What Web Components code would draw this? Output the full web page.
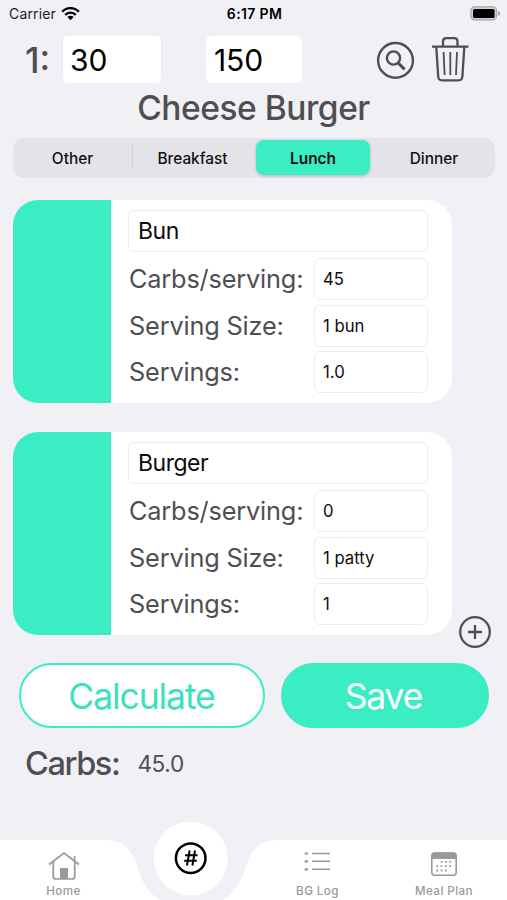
<!DOCTYPE html>
<html lang="en">
<head>
<meta charset="utf-8">
<title>Meal</title>
<style>
html,body{margin:0;background:#f0f0f5}
body{font-family:Inter,"Liberation Sans",sans-serif;color:#4f4f51;width:507px;height:900px;overflow:hidden}
</style>
</head>
<body>
<meal-screen></meal-screen>
<script>
const define = (name, html) => {
  const template = document.createElement('template');
  template.innerHTML = '<style>*{box-sizing:border-box}svg{display:block}:host{box-sizing:border-box;white-space:nowrap}</style>' + html;
  customElements.define(name, class extends HTMLElement {
    constructor() {
      super();
      this.attachShadow({mode: 'open'}).append(template.content.cloneNode(true));
    }
  });
};

define('status-bar', `
<style>
:host{display:grid;grid-template-columns:1fr auto 1fr;align-items:center;height:27px;padding:0 6px 0 9px;font-size:14px;color:#1c1c1e}
.l{display:flex;align-items:center;gap:5px;letter-spacing:.15px}
.t{font-weight:600;color:#000;font-size:14px;letter-spacing:.35px;padding-right:1px}
.b{justify-self:end}
</style>
<div class="l"><span>Carrier</span>
<svg width="19" height="15" viewBox="0 0 19 15" fill="none" stroke="#000" stroke-width="2.3"><path d="M1.2 5.7A11.6 11.6 0 0 1 17.8 5.7"/><path d="M4.2 8.9A7.3 7.3 0 0 1 14.8 8.9"/><path d="M9.5 14.2L6.4 11.1A4.4 4.4 0 0 1 12.6 11.1Z" fill="#000" stroke="none"/></svg></div>
<span class="t">6:17 PM</span>
<svg class="b" width="31" height="15" viewBox="0 0 31 15"><rect x=".9" y=".9" width="25.6" height="13" rx="3.8" fill="#d4d4d8" stroke="#a5a5a9" stroke-width="1.2"/><rect x="3" y="3" width="21.6" height="9" rx="1.5"/><path d="M28 4.8q2.2 1 2.2 2.7t-2.2 2.7z" fill="#a5a5a9"/></svg>`);

define('text-field', `
<style>
:host{display:flex;flex-shrink:0;align-items:center;height:42px;padding:0 8px;background:#fff;border:1px solid #ececee;border-radius:6px;color:#0c0c0e;font-size:16.7px}
:host([large]){font-size:23px;letter-spacing:-.5px;padding:0 9px}
:host([ratio]){height:49px;font-size:30px;letter-spacing:-.1px;padding:0 7px;border-color:#f0f0f2;color:#000}
</style><slot></slot>`);

define('ratio-row', `
<style>
:host{display:flex;height:49px;margin:8px 38px 0 25px;align-items:center}
b{font-weight:500;font-size:35px;width:37px;flex-shrink:0}
text-field:nth-of-type(1){width:100px;margin-right:43px}
text-field:nth-of-type(2){width:98px;padding-left:8px}
svg{flex-shrink:0}
.s{margin:0 0 0 73px}.t{margin-left:17px}
</style>
<b>1:</b><text-field ratio>30</text-field><text-field ratio>150</text-field>
<svg class="s" width="39" height="39" viewBox="0 0 39 39" fill="none" stroke="#4f4f51" stroke-width="2.4"><circle cx="19.5" cy="20.4" r="17.4"/><circle cx="17.5" cy="18" r="6.6"/><path d="M22.2 23L28.6 29.4" stroke-width="3"/></svg>
<svg class="t" width="37" height="47" viewBox="0 0 37 47" fill="none" stroke="#4f4f51" stroke-width="2.3"><path d="M0 10.7H36.5M11 10.5V5.5Q11 2.2 14.3 2.2H22.2Q25.5 2.2 25.5 5.5V10.5"/><path d="M4.3 11L6.2 40.5Q6.6 44.4 10.2 44.4H26.5Q30 44.4 30.4 40.5L32.3 11"/><path d="M11.6 16L12.6 39M18.3 16V39M25 16L24 39" stroke-width="1.8"/></svg>`);

define('meal-title', `<style>:host{display:block;height:50px;line-height:48px;text-align:center;font-size:33.5px;font-weight:500;letter-spacing:-.45px}</style><slot></slot>`);

define('segment-item', `
<style>:host{display:flex;align-items:center;justify-content:center;border-radius:8px;padding-top:1px;font-size:15.4px;font-weight:500;color:#111113}
:host([selected]){font-weight:600;background:#3aedc3;box-shadow:0 1px 3px #0003}
:host([divided]){border-right:1px solid transparent;border-image:linear-gradient(#0000 20%,#cfcfd4 20% 80%,#0000 80%) 1}</style><slot></slot>`);
define('segment-bar', `
<style>:host{display:grid;grid-template-columns:120px 121px 116px 1fr;height:40px;padding:2px 0 3px 0;margin:0 12px 0 13px;border-radius:11px;background:#e4e4e8}
::slotted(:nth-child(2)){padding-right:2px}::slotted(:nth-child(3)){margin:0 0 0 2px}::slotted(:nth-child(4)){padding-left:3px}</style><slot></slot>`);

define('food-card', `
<style>
:host{display:flex;width:439px;height:203px;margin-left:13px;border-radius:25px;background:#fff;overflow:hidden}
.g{width:98px;background:#3aedc3}
.f{flex:1;display:grid;grid-template-columns:186px 114px;grid-template-rows:42px 48px 47px 46px;align-content:start;padding:10px 0 0 17px;align-items:end}
.n{grid-column:1/3}
.label{font-size:25.3px;line-height:42px;letter-spacing:-.17px;padding-left:1px}
</style>
<div class="g"></div>
<div class="f"><text-field class="n" large><slot name="name"></slot></text-field>
<span class="label">Carbs/serving:</span><text-field><slot name="carbs"></slot></text-field>
<span class="label">Serving Size:</span><text-field><slot name="size"></slot></text-field>
<span class="label">Servings:</span><text-field><slot name="count"></slot></text-field></div>`);

define('food-list', `
<style>:host{display:grid;position:relative;height:435px;row-gap:29px;margin-top:22.4px;align-content:start}
svg{position:absolute;right:15px;bottom:-14px}</style><slot></slot>
<svg width="34" height="34" viewBox="0 0 34 34" fill="none" stroke="#4f4f51" stroke-width="2.3"><circle cx="17" cy="17" r="14.8"/><path d="M10 17H24M17 10V24"/></svg>`);

define('pill-button', `
<style>:host{display:flex;align-items:center;justify-content:center;height:65px;padding-top:2px;border-radius:33px;border:2px solid #3aedc3;background:#fff;color:#3be2bb;font-size:35.5px;letter-spacing:-1.1px}
:host([filled]){background:#3aedc3;color:#fff;padding-right:3px}</style><slot></slot>`);
define('action-row', `<style>:host{display:grid;grid-template-columns:246px 208px;column-gap:16px;margin:27.8px 0 0 19px}
::slotted(:first-child){padding-right:1px}</style><slot></slot>`);
define('carb-total', `<style>:host{display:flex;align-items:center;height:50px;margin:10.4px 0 0 25px;gap:18px}
b{font-weight:500;font-size:32.5px;letter-spacing:-1.4px}span{font-size:22.6px;letter-spacing:-.4px}</style><b>Carbs:</b><span><slot></slot></span>`);

define('tab-item', `<style>:host{display:flex;flex-direction:column;align-items:center;color:#98989a;font-size:11.6px;font-weight:500;letter-spacing:.45px;gap:3px}</style><slot name="icon"></slot><span><slot></slot></span>`);
define('tab-bar', `
<style>
:host{display:block;position:absolute;left:0;right:0;bottom:0;height:80px}
.bg{position:absolute;inset:0}
.items{position:relative;display:grid;grid-template-columns:127px 127px 127px 126px;padding-top:29px;height:80px}
.items>svg{margin:-9px auto 0 46px}
</style>
<svg class="bg" width="507" height="80" viewBox="0 0 507 80"><path d="M0 20H105C123 20 131 29 136 43C141 60 147 72 160 80H0ZM507 20H278C260 20 252 29 247 43C242 60 236 72 223 80H507Z" fill="#fff"/><circle cx="190.7" cy="38.5" r="37" fill="#fff"/></svg>
<div class="items">
<tab-item><svg slot="icon" width="32" height="32" viewBox="0 0 32 32" fill="none" stroke="#99999b" stroke-width="1.7"><path d="M1 15.5L16 4L31 15.5M5.3 12.5V27.5Q5.3 30 7.8 30H24.2Q26.7 30 26.7 27.5V12.5M26.5 11.5V7"/><path d="M12 19H20V30H12Z" fill="#99999b" stroke="none"/></svg>Home</tab-item>
<svg width="36" height="36" viewBox="0 0 36 36" fill="none" stroke="#000"><circle cx="17.7" cy="18.2" r="14.8" stroke-width="2.5"/><path d="M16.6 10.5L14 25.5M22 10.5L19.4 25.5M12 15.3H24.6M11.2 20.7H23.8" stroke-width="2"/></svg>
<tab-item><svg slot="icon" width="32" height="32" viewBox="0 0 32 32" stroke="#99999b" stroke-width="1.5"><path d="M10 4.5H28M10 12.3H28M10 20.3H28"/><path d="M2.6 4.5H6M2.6 12.3H6M2.6 20.3H6" stroke-width="2.2"/></svg>BG Log</tab-item>
<tab-item><svg slot="icon" width="32" height="32" viewBox="0 0 32 32" fill="none" stroke="#99999b"><rect x="3.8" y="4" width="24.4" height="22.2" rx="3" stroke-width="1.6"/><path d="M4 9.4V6Q4 4 6 4H26Q28 4 28 6V9.4Z" fill="#99999b"/><path d="M12.8 12.8H24M8.3 17.2H24M8.3 21.5H20" stroke-width="1.8" stroke-dasharray="1.8 2.5"/></svg>Meal Plan</tab-item>
</div>`);

define('meal-screen', `
<style>:host{display:flex;flex-direction:column;position:relative;height:900px;background:#f0f0f5}
segment-bar{margin-top:4px}</style>
<status-bar></status-bar>
<ratio-row></ratio-row>
<meal-title>Cheese Burger</meal-title>
<segment-bar><segment-item divided>Other</segment-item><segment-item>Breakfast</segment-item><segment-item selected>Lunch</segment-item><segment-item>Dinner</segment-item></segment-bar>
<food-list>
<food-card><span slot="name">Bun</span><span slot="carbs">45</span><span slot="size">1 bun</span><span slot="count">1.0</span></food-card>
<food-card><span slot="name">Burger</span><span slot="carbs">0</span><span slot="size">1 patty</span><span slot="count">1</span></food-card>
</food-list>
<action-row><pill-button>Calculate</pill-button><pill-button filled>Save</pill-button></action-row>
<carb-total>45.0</carb-total>
<tab-bar></tab-bar>`);
</script>
</body>
</html>
